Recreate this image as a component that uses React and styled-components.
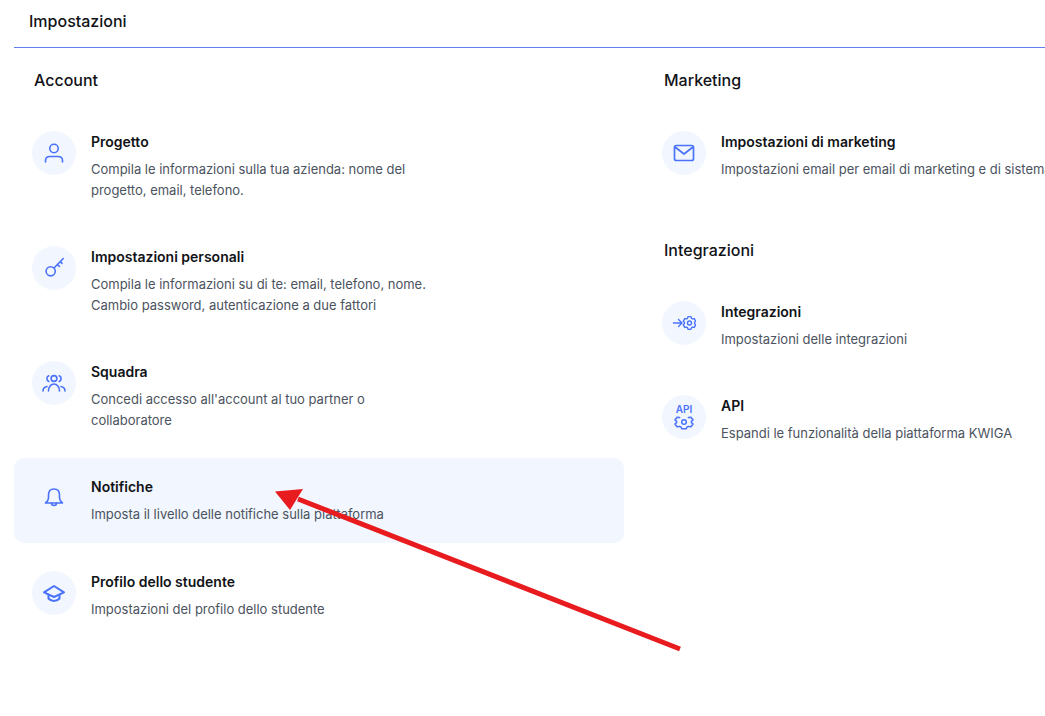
import React from 'react'
import styled, { createGlobalStyle } from 'styled-components'

const GlobalStyle = createGlobalStyle`
  * {
    margin: 0;
    padding: 0;
    box-sizing: border-box;
  }
  html, body {
    width: 100%;
    height: 100%;
    overflow: hidden;
    background: #fff;
  }
  body {
    font-family: Inter, "Liberation Sans", sans-serif;
  }
`

const Page = styled.div`
  position: relative;
  width: 1045px;
  height: 716px;
  overflow: hidden;
  padding-left: 14px;
`
const Header = styled.header`
  height: 48px;
  padding: 12px 0 0 15px;
  border-bottom: 1px solid #6480ee;
  font-size: 16px;
  line-height: 19px;
  font-weight: 500;
  color: #111317;
`
const Columns = styled.div`
  display: grid;
  grid-template-columns: 610px 610px;
  gap: 20px;
`
const Column = styled.section`
  display: flex;
  flex-direction: column;
  padding-top: 23px;
`
const SectionTitle = styled.h2`
  padding-left: 20px;
  margin-bottom: 23px;
  font-size: 16px;
  line-height: 19px;
  font-weight: 500;
  color: #111317;
`
const Group = styled.div`
  display: flex;
  flex-direction: column;
  gap: 10px;
  margin-bottom: ${(p) => p.$after || 0}px;
`
const Row = styled.div`
  display: flex;
  gap: 15px;
  padding: 18px;
  border-radius: 10px;
  background: ${(p) => (p.$active ? '#f1f6ff' : 'transparent')};
`
const IconCircle = styled.div`
  flex: none;
  display: flex;
  align-items: center;
  justify-content: center;
  width: 44px;
  height: 44px;
  border-radius: 50%;
  background: ${(p) => (p.$active ? 'transparent' : '#f1f6ff')};
  color: #4a72fb;
`
const RowText = styled.div`
  display: flex;
  flex-direction: column;
  gap: 7px;
  padding-top: 1px;
`
const RowTitle = styled.div`
  font-size: 14px;
  line-height: 20px;
  font-weight: 600;
  color: #111317;
`
const RowDesc = styled.p`
  max-width: 340px;
  font-size: 13px;
  line-height: 20.5px;
  letter-spacing: -0.01px;
  color: #4b5360;
`
const ArrowLayer = styled.svg`
  position: absolute;
  left: 0;
  top: 0;
  pointer-events: none;
`
const ApiStack = styled.div`
  display: flex;
  flex-direction: column;
  align-items: center;
  margin-top: 1px;
`
const ApiLabel = styled.span`
  font-size: 10px;
  line-height: 9px;
  font-weight: 600;
  color: #4a72fb;
`

const Glyph = ({ children, width = 24, height = 24, sw = 1.6 }) => (
  <svg width={width} height={height} viewBox={`0 0 ${width} ${height}`} fill="none" stroke="currentColor" strokeWidth={sw} strokeLinecap="round" strokeLinejoin="round">
    {children}
  </svg>
)

const UserIcon = () => (
  <Glyph>
    <circle cx="12" cy="7.500" r="4.200" />
    <path d="M3.500 21v-1.500c0-2.500 2-4 4.500-4h8c2.500 0 4.500 1.500 4.500 4V21" />
  </Glyph>
)
const KeyIcon = () => (
  <Glyph>
    <circle cx="8.700" cy="15.300" r="4.600" />
    <path d="M12 12 21.300 2.500M15.500 8.500l2 2M18.500 5.500l1.500 2" />
  </Glyph>
)
const TeamIcon = () => (
  <Glyph>
    <circle cx="12" cy="7.500" r="2.900" />
    <path d="M6.500 20c0-4 2.500-7 5.500-7s5.500 3 5.500 7" />
    <path d="M6.800 4.800a3 3 0 0 0 0 5.600M17.200 4.800a3 3 0 0 1 0 5.600" />
    <path d="M1 20c0-2.500 1.500-4 4-4.500M23 20c0-2.500-1.500-4-4-4.500" />
  </Glyph>
)
const BellIcon = () => (
  <Glyph>
    <path d="M12 3c-3.500 0-5.500 2.500-5.500 6v3c0 2-1 3.500-3 5h17c-2-1.500-3-3-3-5V9c0-3.500-2-6-5.500-6z" />
    <path d="M9.500 17a2.500 2.500 0 0 0 5 0" />
  </Glyph>
)
const CapIcon = () => (
  <Glyph sw={2}>
    <path d="M12 5 22 11.300 12 16 2 11.300z" />
    <path d="M6.500 13.800v3.700c1.500 1.700 3.500 2.500 5.500 2.500s4-.8 5.500-2.500v-3.700" />
  </Glyph>
)
const MailIcon = () => (
  <Glyph sw={1.7}>
    <rect x="2.500" y="4.500" width="19" height="15" rx="1.800" />
    <path d="m3 6 9 7 9-7" />
  </Glyph>
)

// contorno di una rotella, calcolato dente per dente
const gearPath = (cx, cy, rx, ry, teeth) => {
  const pt = (deg, k) => {
    const a = (deg * Math.PI) / 180
    return `${(cx + rx * k * Math.cos(a)).toFixed(2)} ${(cy + ry * k * Math.sin(a)).toFixed(2)}`
  }
  const points = teeth.flatMap((t) => [pt(t - 24, 0.78), pt(t - 13, 1), pt(t + 13, 1), pt(t + 24, 0.78)])
  return `M${points.join('L')}`
}

const IntegrationIcon = () => (
  <Glyph sw={1.4}>
    <path d="M1.500 12H10M6.500 8.500 10 12l-3.500 3.500" />
    <path d={`${gearPath(17.5, 12, 6.5, 6.5, [30, 90, 150, 210, 270, 330])}Z`} />
    <circle cx="17.500" cy="12" r="2" />
  </Glyph>
)
const ApiIcon = () => (
  <ApiStack>
    <ApiLabel>API</ApiLabel>
    <Glyph width={22} height={16} sw={1.5}>
      <path d={gearPath(11, 8, 9.500, 7, [-30, 30, 90, 150, 210])} />
      <circle cx="11" cy="8" r="2.300" />
    </Glyph>
  </ApiStack>
)

const SettingRow = ({ icon, title, active, children }) => (
  <Row $active={active}>
    <IconCircle $active={active}>{icon}</IconCircle>
    <RowText>
      <RowTitle>{title}</RowTitle>
      <RowDesc>{children}</RowDesc>
    </RowText>
  </Row>
)

export default function App() {
  return (
    <Page>
      <GlobalStyle />
      <Header>Impostazioni</Header>
      <Columns>
        <Column>
          <SectionTitle>Account</SectionTitle>
          <Group>
            <SettingRow icon={<UserIcon />} title="Progetto">
              Compila le informazioni sulla tua azienda: nome del progetto, email, telefono.
            </SettingRow>
            <SettingRow icon={<KeyIcon />} title="Impostazioni personali">
              Compila le informazioni su di te: email, telefono, nome. Cambio password, autenticazione a due fattori
            </SettingRow>
            <SettingRow icon={<TeamIcon />} title="Squadra">
              Concedi accesso all'account al tuo partner o collaboratore
            </SettingRow>
            <SettingRow active icon={<BellIcon />} title="Notifiche">
              Imposta il livello delle notifiche sulla piattaforma
            </SettingRow>
            <SettingRow icon={<CapIcon />} title="Profilo dello studente">
              Impostazioni del profilo dello studente
            </SettingRow>
          </Group>
        </Column>
        <Column>
          <SectionTitle>Marketing</SectionTitle>
          <Group $after={43}>
            <SettingRow icon={<MailIcon />} title="Impostazioni di marketing">
              Impostazioni email per email di marketing e di sistema
            </SettingRow>
          </Group>
          <SectionTitle>Integrazioni</SectionTitle>
          <Group>
            <SettingRow icon={<IntegrationIcon />} title="Integrazioni">
              Impostazioni delle integrazioni
            </SettingRow>
            <SettingRow icon={<ApiIcon />} title="API">
              Espandi le funzionalità della piattaforma KWIGA
            </SettingRow>
          </Group>
        </Column>
      </Columns>
      <ArrowLayer width="1045" height="716" viewBox="0 0 1045 716">
        <path d="M680 649 298 499" stroke="#e81c1f" strokeWidth="5" fill="none" />
        <path d="M275 491.500 303 489 290 510z" fill="#e81c1f" />
      </ArrowLayer>
    </Page>
  )
}
